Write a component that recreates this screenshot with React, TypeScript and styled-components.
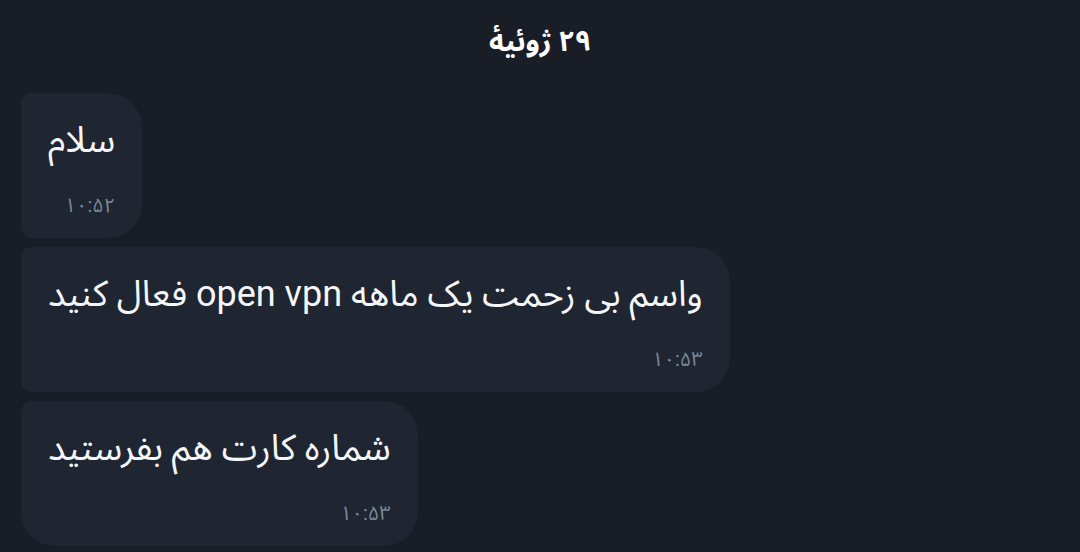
import React from "react";
import styled, { createGlobalStyle } from "styled-components";

const Global = createGlobalStyle`
  html, body { margin: 0; padding: 0; background: #181d26; }
  body { font-family: Roboto, "Noto Sans Arabic", "Noto Naskh Arabic", "DejaVu Sans", sans-serif; }
`;

const Page = styled.div`
  width: 1080px;
  height: 552px;
  background: #181d26;
  overflow: hidden;
  display: flex;
  flex-direction: column;
`;

const DateHeader = styled.div`
  padding-top: 22px;
  height: 40px;
  line-height: 40px;
  text-align: center;
  color: #ffffff;
  font-weight: 700;
  font-size: 28.5px;
  direction: rtl;
`;

const List = styled.div`
  margin-top: 31px;
  padding-left: 21px;
  display: flex;
  flex-direction: column;
  align-items: flex-start;
  gap: 9px;
`;

const Bubble = styled.div<{ $last?: boolean }>`
  direction: rtl;
  background: #1f2531;
  border-radius: 10px 34px 34px ${(p) => (p.$last ? "34px" : "10px")};
  padding: 25px 27px 21px;
  display: flex;
  flex-direction: column;
  align-items: flex-start;
`;

const Text = styled.div`
  color: #f4f6f9;
  font-size: 36px;
  line-height: 44px;
  white-space: nowrap;
`;

const Time = styled.div`
  margin-top: 31px;
  color: #7c8794;
  font-size: 20px;
  line-height: 24px;
`;

const messages = [
  { text: "سلام", time: "۱۰:۵۲" },
  { text: "واسم بی زحمت یک ماهه open vpn فعال کنید", time: "۱۰:۵۳" },
  { text: "شماره کارت هم بفرستید", time: "۱۰:۵۳" },
];

export default function App() {
  return (
    <Page>
      <Global />
      <DateHeader>۲۹ ژوئیهٔ</DateHeader>
      <List>
        {messages.map((m, i) => (
          <Bubble key={i} $last={i === messages.length - 1}>
            <Text>{m.text}</Text>
            <Time>{m.time}</Time>
          </Bubble>
        ))}
      </List>
    </Page>
  );
}
